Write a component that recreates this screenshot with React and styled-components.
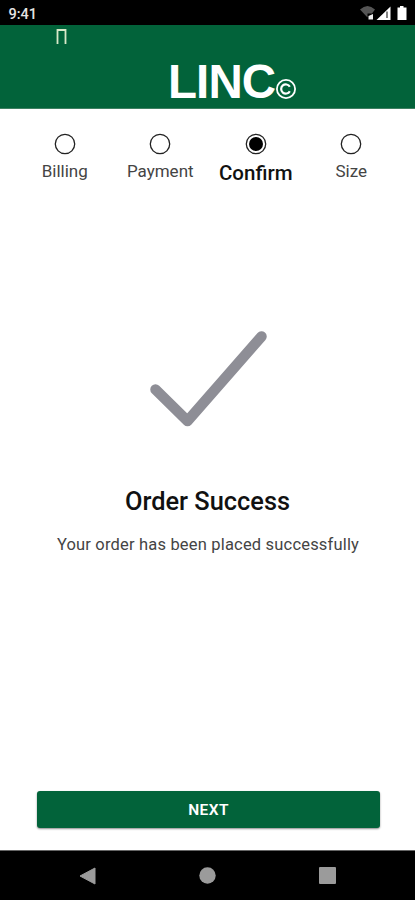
import React from "react";
import styled, { createGlobalStyle } from "styled-components";

const GlobalStyle = createGlobalStyle`
  * {
    box-sizing: border-box;
  }
  body {
    margin: 0;
    background: #fff;
    font-family: Roboto, sans-serif;
  }
`;

const Screen = styled.div`
  display: flex;
  flex-direction: column;
  width: 415px;
  height: 900px;
  background: #fff;
  overflow: hidden;
`;

const StatusBar = styled.div`
  display: flex;
  justify-content: space-between;
  height: 25px;
  padding: 6px 7px 0 8.5px;
  background: #000;
`;

const Time = styled.span`
  color: #e4e4e4;
  font-size: 14.5px;
  font-weight: 500;
  line-height: 17px;
`;

const Header = styled.header`
  display: flex;
  height: 84px;
  background: #02633a;
  border-bottom: 1px solid #3d8061;
`;

const Menu = styled.svg`
  flex: none;
  margin: 3px 0 0 55px;
`;

const Logo = styled.div`
  display: flex;
  margin: 33px 0 0 100px;
  color: #fff;
  font-family: "Liberation Sans", sans-serif;
  font-weight: 700;
  font-size: 47.5px;
  line-height: 47px;
  letter-spacing: -0.9px;
`;

const Mark = styled.svg`
  margin: 20px 0 0 0;
`;

const Steps = styled.div`
  display: grid;
  grid-template-columns: repeat(4, 95.5px);
  padding: 24px 0 0 17px;
`;

const Step = styled.div`
  display: flex;
  flex-direction: column;
  align-items: center;
`;

const StepLabel = styled.span`
  margin-top: ${p => (p.$active ? 7 : 5)}px;
  color: ${p => (p.$active ? "#111" : "#444")};
  font-size: ${p => (p.$active ? 20.5 : 17)}px;
  font-weight: ${p => (p.$active ? 500 : 400)};
  line-height: 22px;
`;

const Result = styled.main`
  display: flex;
  flex: 1;
  flex-direction: column;
  align-items: center;
  padding-top: 145px;
`;

const Title = styled.h1`
  margin: 54px 0 0;
  color: #111;
  font-size: 25.4px;
  font-weight: 500;
  line-height: 36px;
`;

const Message = styled.p`
  margin: 15px 0 0 1px;
  color: #444;
  font-size: 16.5px;
  font-weight: 400;
  line-height: 22px;
  letter-spacing: 0.18px;
`;

const NextButton = styled.button`
  height: 37px;
  margin: 0 35px 22px 37px;
  padding: 0;
  border: 0;
  border-radius: 3px;
  background: #02633a;
  box-shadow: 0 1px 2px rgba(0, 0, 0, 0.45);
  color: #fff;
  font-family: Roboto, sans-serif;
  font-size: 15.5px;
  font-weight: 600;
  letter-spacing: 0.4px;
`;

const NavBar = styled.nav`
  display: flex;
  align-items: center;
  height: 50px;
  padding-left: 79px;
  gap: 103px;
  background: #000;
  border-top: 1px solid #666;
`;

const steps = ["Billing", "Payment", "Confirm", "Size"];
const current = "Confirm";

function StatusIcons() {
  return (
    <svg width="50" height="16" viewBox="0 0 50 16">
      <path d="M2 3.500 Q9.500 -3.500 17 3.500 L14 7.500 H9.500 V11.500 Z" fill="#555" />
      <path d="M10.500 10 L15 8 V13.500 H10.500 Z" fill="#eee" />
      <path d="M18.500 14 L32.500 0.500 V14 Z" fill="#fff" />
      <path d="M29 5.500 V12" stroke="#333" strokeWidth="1.200" />
      <path d="M39.500 1.500 H42 V0 H45.500 V1.500 H48.500 V14 H39.500 Z" fill="#fff" />
    </svg>
  );
}

function Radio({ checked }) {
  return (
    <svg width="22" height="22" viewBox="0 0 22 22">
      <circle cx="11" cy="11" r="9.7" fill="#fff" stroke="#222" strokeWidth="1.3" />
      {checked && <circle cx="11" cy="11" r="7" fill="#000" />}
    </svg>
  );
}

const App = () => (
  <React.Fragment>
    <GlobalStyle />
    <Screen>
      <StatusBar>
        <Time>9:41</Time>
        <StatusIcons />
      </StatusBar>
      <Header>
        <Menu width="13" height="17" viewBox="0 0 13 17">
          <path d="M2.500 16 V2 H10.500 V16" fill="none" stroke="#d9e8c9" strokeWidth="1.800" />
        </Menu>
        <Logo>
          LINC
          <Mark width="22" height="22" viewBox="0 0 22 22">
            <circle cx="11" cy="11" r="9.100" fill="none" stroke="#fff" strokeWidth="1.800" />
            <path d="M14.800 8.800 A4.600 4.600 0 1 0 14.800 13.200" fill="none" stroke="#fff" strokeWidth="2.200" />
          </Mark>
        </Logo>
      </Header>
      <Steps>
        {steps.map(name => (
          <Step key={name}>
            <Radio checked={name === current} />
            <StepLabel $active={name === current}>{name}</StepLabel>
          </Step>
        ))}
      </Steps>
      <Result>
        <svg width="120" height="100" viewBox="0 0 120 100">
          <path
            d="M7.500 60.500 L39.500 92 L113.500 7.500"
            fill="none"
            stroke="#8e8e96"
            strokeWidth="10.500"
            strokeLinecap="round"
            strokeLinejoin="round"
          />
        </svg>
        <Title>Order Success</Title>
        <Message>Your order has been placed successfully</Message>
      </Result>
      <NextButton>NEXT</NextButton>
      <NavBar>
        <svg width="17" height="18" viewBox="0 0 17 18">
          <path d="M1 9 L16 1 V17 Z" fill="#9b9b9b" stroke="#9b9b9b" strokeLinejoin="round" />
        </svg>
        <svg width="17" height="17" viewBox="0 0 17 17">
          <circle cx="8.500" cy="8.500" r="8.200" fill="#9b9b9b" />
        </svg>
        <svg width="17" height="17" viewBox="0 0 17 17">
          <rect width="17" height="17" rx="1" fill="#9b9b9b" />
        </svg>
      </NavBar>
    </Screen>
  </React.Fragment>
);

export default App;
